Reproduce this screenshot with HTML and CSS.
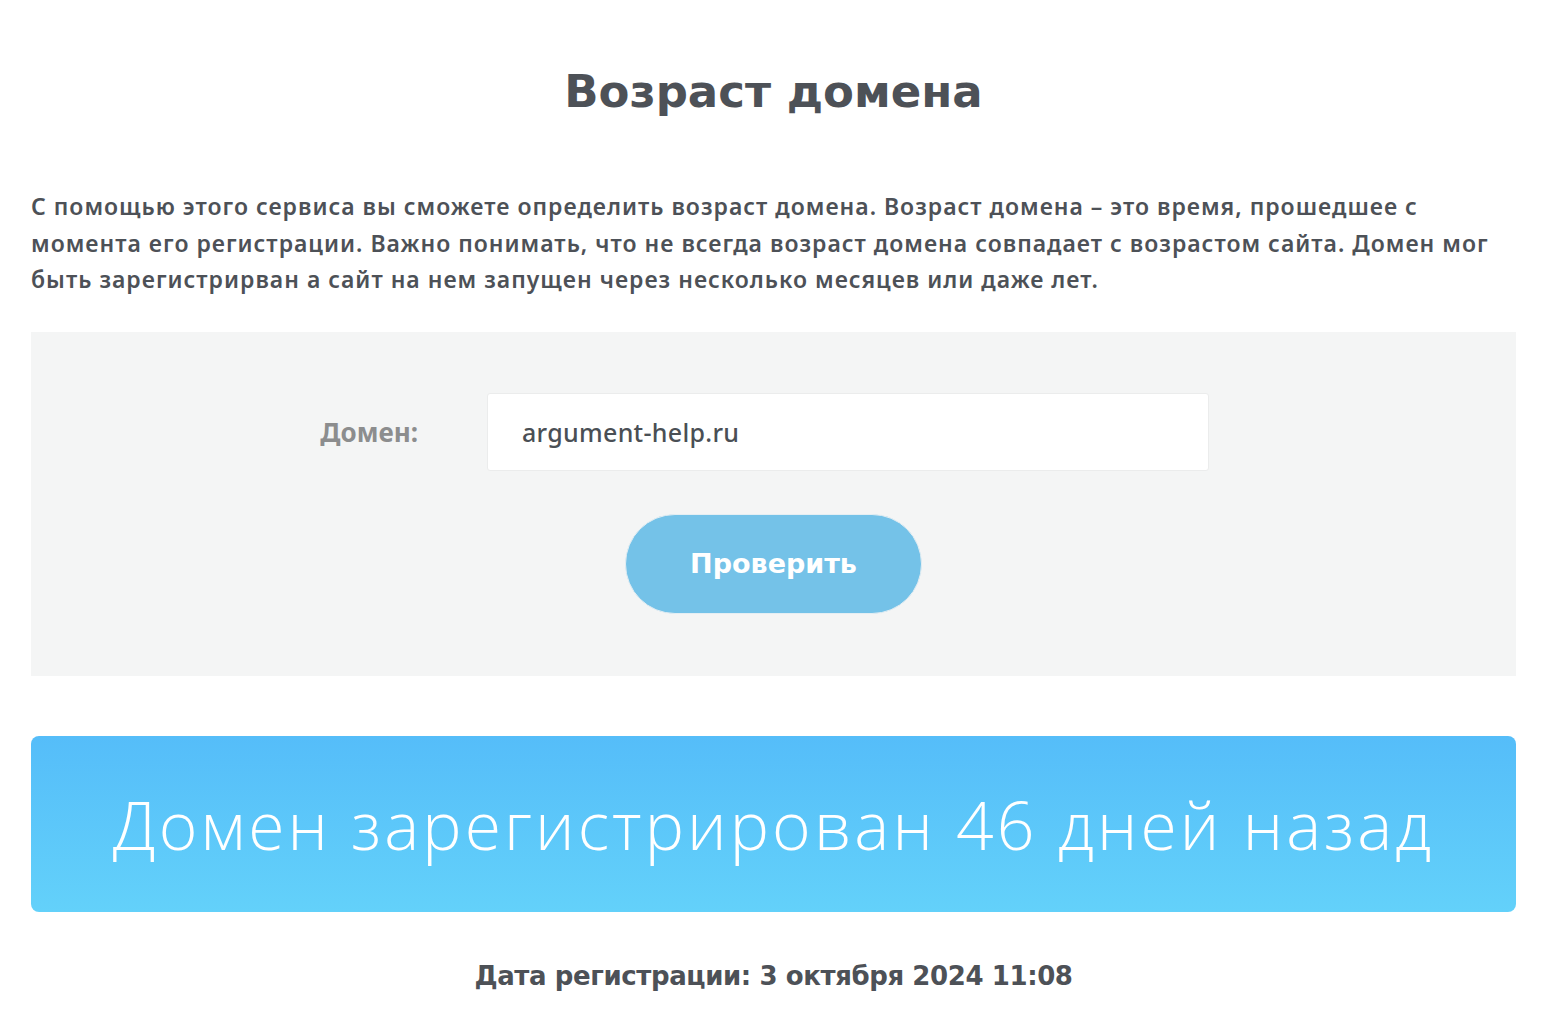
FILE: index.html
```html
<!DOCTYPE html>
<html lang="ru">
<head>
<meta charset="utf-8">
<title>Возраст домена</title>
<link rel="stylesheet" href="styles.css">
</head>
<body>
<main class="page">
  <h1 class="title">Возраст домена</h1>
  <p class="intro">С помощью этого сервиса вы сможете определить возраст домена. Возраст домена – это время, прошедшее с<br>момента его регистрации. Важно понимать, что не всегда возраст домена совпадает с возрастом сайта. Домен мог<br>быть зарегистрирван а сайт на нем запущен через несколько месяцев или даже лет.</p>
  <form class="check-box">
    <div class="field-row">
      <label class="field-label" for="domain">Домен:</label>
      <input class="field-input" id="domain" type="text" value="argument-help.ru">
    </div>
    <div class="btn-row">
      <button class="btn" type="button">Проверить</button>
    </div>
  </form>
  <div class="result">Домен зарегистрирован 46 дней назад</div>
  <p class="reg-date">Дата регистрации: 3 октября 2024 11:08</p>
</main>
</body>
</html>
```
FILE: styles.css
```css
html, body {
  margin: 0;
  padding: 0;
  background: #ffffff;
}
.page {
  padding: 0 34px 0 31px;
  color: #4d5157;
  font-family: "Noto Sans", "Open Sans", sans-serif;
}
.title {
  margin: 0;
  padding-top: 62px;
  height: 60px;
  line-height: 60px;
  text-align: center;
  font-family: "DejaVu Sans", sans-serif;
  font-weight: 700;
  font-size: 45px;
  color: #4d5157;
}
.intro {
  margin: 66px 0 0;
  font-family: "Noto Sans", sans-serif;
  font-weight: 600;
  font-size: 23px;
  letter-spacing: 1px;
  line-height: 36.5px;
  color: #4d5157;
}
.check-box {
  margin-top: 34px;
  background: #f4f5f5;
  padding: 61px 0 62px;
}
.field-row {
  display: grid;
  grid-template-columns: 387px 722px;
  column-gap: 69px;
  align-items: center;
}
.field-label {
  text-align: right;
  font-family: "Noto Sans", sans-serif;
  font-weight: 700;
  font-size: 26px;
  color: #8c8d8e;
}
.field-input {
  box-sizing: border-box;
  height: 78px;
  width: 722px;
  border: 1px solid #ebecec;
  border-radius: 3px;
  background: #ffffff;
  padding: 0 34px;
  font-family: "Noto Sans", sans-serif;
  font-weight: 500;
  font-size: 25px;
  letter-spacing: 0.3px;
  color: #4a4f55;
  outline: none;
}
.btn-row {
  display: flex;
  justify-content: center;
  margin-top: 43px;
}
.btn {
  box-sizing: border-box;
  width: 297px;
  height: 100px;
  border: 1px solid #e4eef3;
  border-radius: 50px;
  background: #74c2e8;
  color: #ffffff;
  font-family: "DejaVu Sans", sans-serif;
  font-weight: 700;
  font-size: 27px;
  cursor: pointer;
}
.result {
  margin-top: 60px;
  height: 176px;
  border-radius: 8px;
  background: linear-gradient(180deg, #55bdf9 0%, #63d1fa 100%);
  display: flex;
  align-items: center;
  justify-content: center;
  color: #ffffff;
  font-family: "Open Sans", sans-serif;
  font-weight: 300;
  font-size: 66px;
  letter-spacing: 3.1px;
}
.reg-date {
  margin: 49px 0 0;
  text-align: center;
  font-family: "DejaVu Sans", sans-serif;
  font-weight: 700;
  font-size: 26px;
  letter-spacing: -0.4px;
  color: #4d5157;
}
```
